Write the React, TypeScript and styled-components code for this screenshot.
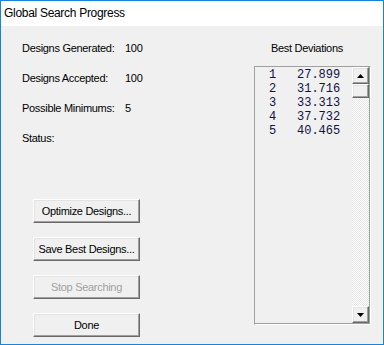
import styled, { createGlobalStyle } from 'styled-components';

const GlobalStyle = createGlobalStyle`
  html, body {
    margin: 0;
    padding: 0;
    background: #ffffff;
  }
  * {
    box-sizing: border-box;
  }
`;

const stats = [
  { label: 'Designs Generated:', value: '100' },
  { label: 'Designs Accepted:', value: '100' },
  { label: 'Possible Minimums:', value: '5' },
  { label: 'Status:', value: '' },
];

const deviations = [
  { rank: 1, value: '27.899' },
  { rank: 2, value: '31.716' },
  { rank: 3, value: '33.313' },
  { rank: 4, value: '37.732' },
  { rank: 5, value: '40.465' },
];

function Arrow({ down }: { down?: boolean }) {
  return (
    <svg width="7" height="4" viewBox="0 0 7 4">
      <polygon points={down ? '0,0 7,0 3.5,4' : '0,4 7,4 3.5,0'} fill="#000" />
    </svg>
  );
}

export default function App() {
  return (
    <>
      <GlobalStyle />
      <Window>
        <TitleBar>Global Search Progress</TitleBar>
        <Body>
          <LeftPanel>
            <StatList>
              {stats.map((s) => (
                <StatRow key={s.label}>
                  <StatLabel>{s.label}</StatLabel>
                  <span>{s.value}</span>
                </StatRow>
              ))}
            </StatList>
            <ButtonColumn>
              <Button>Optimize Designs...</Button>
              <Button>Save Best Designs...</Button>
              <Button disabled>Stop Searching</Button>
              <Button>Done</Button>
            </ButtonColumn>
          </LeftPanel>
          <RightPanel>
            <ListTitle>Best Deviations</ListTitle>
            <ListBox>
              <ListItems>
                {deviations.map((d) => (
                  <ListRow key={d.rank}>
                    <Rank>{d.rank}</Rank>
                    <span>{d.value}</span>
                  </ListRow>
                ))}
              </ListItems>
              <ScrollBar>
                <ScrollButton>
                  <Arrow />
                </ScrollButton>
                <Thumb />
                <Track />
                <ScrollButton>
                  <Arrow down />
                </ScrollButton>
              </ScrollBar>
            </ListBox>
          </RightPanel>
        </Body>
      </Window>
    </>
  );
}

const Window = styled.div`
  width: 384px;
  height: 345px;
  border: 1px solid #1883d7;
  display: flex;
  flex-direction: column;
  font-family: 'Liberation Sans', Arial, sans-serif;
  font-size: 11px;
  letter-spacing: -0.3px;
  color: #000;
`;

const TitleBar = styled.div`
  height: 25px;
  line-height: 24px;
  padding-left: 3px;
  background: #ffffff;
  font-size: 12px;
  letter-spacing: -0.3px;
  color: #000;
`;

const Body = styled.div`
  flex: 1;
  background: #f0f0f0;
  display: grid;
  grid-template-columns: 253px 1fr;
`;

const LeftPanel = styled.div`
  display: flex;
  flex-direction: column;
  padding: 7px 0 0 21px;
`;

const StatList = styled.div`
  display: flex;
  flex-direction: column;
`;

const StatRow = styled.div`
  display: flex;
  height: 30px;
  line-height: 30px;
  white-space: nowrap;
`;

const StatLabel = styled.span`
  width: 103px;
`;

const ButtonColumn = styled.div`
  display: flex;
  flex-direction: column;
  gap: 14px;
  margin: 46px 0 0 11px;
`;

const Button = styled.button`
  width: 107px;
  height: 24px;
  padding: 0;
  background: #f0f0f0;
  border-style: solid;
  border-width: 1px;
  border-color: #ffffff #696969 #696969 #ffffff;
  box-shadow: inset -1px -1px 0 #a0a0a0, inset 1px 1px 0 #e3e3e3;
  font-family: 'Liberation Sans', Arial, sans-serif;
  font-size: 11px;
  letter-spacing: -0.3px;
  color: #000;
  &:disabled {
    color: #a0a0a0;
  }
`;

const RightPanel = styled.div`
  display: flex;
  flex-direction: column;
  padding-top: 7px;
`;

const ListTitle = styled.div`
  height: 30px;
  line-height: 30px;
  padding-left: 17px;
  white-space: nowrap;
`;

const ListBox = styled.div`
  margin-top: 3px;
  width: 117px;
  height: 259px;
  display: flex;
  border-style: solid;
  border-width: 1px;
  border-color: #a0a0a0 #ffffff #ffffff #a0a0a0;
  box-shadow: inset 0 -1px 0 #a0a0a0, inset -1px 0 0 #a0a0a0;
`;

const ListItems = styled.div`
  flex: 1;
  padding: 1px 0 0 14px;
  font-family: 'Liberation Mono', 'Courier New', monospace;
  font-size: 12px;
  letter-spacing: 0;
  color: #10104a;
`;

const ListRow = styled.div`
  display: flex;
  height: 14px;
  line-height: 14px;
  white-space: pre;
`;

const Rank = styled.span`
  width: 28px;
`;

const ScrollBar = styled.div`
  width: 17px;
  display: flex;
  flex-direction: column;
  margin-bottom: 1px;
  margin-right: 1px;
`;

const ScrollButton = styled.div`
  height: 17px;
  display: flex;
  align-items: center;
  justify-content: center;
  background: #f0f0f0;
  border-style: solid;
  border-width: 1px;
  border-color: #ffffff #696969 #696969 #ffffff;
  box-shadow: inset -1px -1px 0 #a0a0a0, inset 1px 1px 0 #e3e3e3;
`;

const Thumb = styled(ScrollButton)`
  height: 14px;
`;

const Track = styled.div`
  flex: 1;
  background-color: #ffffff;
  background-image: conic-gradient(#ffffff 25%, #e6e6e6 0 50%, #ffffff 0 75%, #e6e6e6 0);
  background-size: 2px 2px;
`;
